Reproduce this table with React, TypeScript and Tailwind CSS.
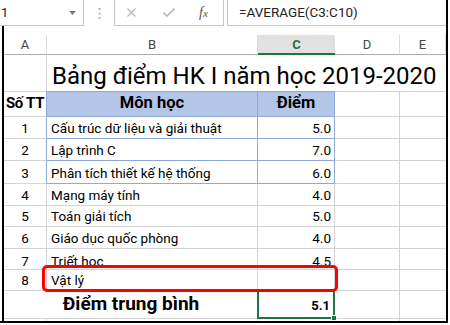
import React from "react";

const font = { fontFamily: "Roboto, 'Liberation Sans', sans-serif" };

const grid = "border-[#d4d4d4]";
const blue = "border-[#8ea9db]";

const rows = [
  { n: "1", name: "Cấu trúc dữ liệu và giải thuật", score: "5.0", h: "h-[22px]", blue: true, pb: "pb-[3px]" },
  { n: "2", name: "Lập trình C", score: "7.0", h: "h-[22px]", blue: true, pb: "pb-[3px]" },
  { n: "3", name: "Phân tích thiết kế hệ thống", score: "6.0", h: "h-[23px]", blue: true, pb: "pb-[3px]" },
  { n: "4", name: "Mạng máy tính", score: "4.0", h: "h-[22px]", blue: false, pb: "pb-[3px]" },
  { n: "5", name: "Toán giải tích", score: "5.0", h: "h-[21px]", blue: false, pb: "pb-[3px]" },
  { n: "6", name: "Giáo dục quốc phòng", score: "4.0", h: "h-[22px]", blue: false, pb: "pb-[3px]" },
  { n: "7", name: "Triết học", score: "4.5", h: "h-[21px]", blue: false, pb: "pb-[1px]" },
  { n: "8", name: "Vật lý", score: "", h: "h-[21px]", blue: false, pb: "pb-[3px]" },
];

function FormulaBar() {
  return (
    <div className="flex h-[26px] shrink-0">
      <div className="w-[84px] h-full border-r border-b border-[#c6c6c6] flex items-center justify-between pr-[7px]">
        <span className="text-[13px] text-[#222] leading-none pl-[1px]">1</span>
        <svg width="7" height="4" viewBox="0 0 7 4">
          <path d="M0 0h7L3.5 4z" fill="#7a7a7a" />
        </svg>
      </div>
      <div className="w-[30px] flex items-center justify-center">
        <svg width="3" height="11" viewBox="0 0 3 11">
          <rect x="0.5" y="0" width="2" height="2" fill="#b5b5b5" />
          <rect x="0.5" y="4.5" width="2" height="2" fill="#b5b5b5" />
          <rect x="0.5" y="9" width="2" height="2" fill="#b5b5b5" />
        </svg>
      </div>
      <div className="w-[110px] h-full border-l border-r border-b border-[#c6c6c6] flex items-center">
        <svg width="9" height="9" viewBox="0 0 9 9" className="ml-[12px]">
          <path d="M0.5 0.5l8 8M8.5 0.5l-8 8" stroke="#b8b8b8" strokeWidth="1.3" />
        </svg>
        <svg width="12" height="9" viewBox="0 0 12 9" className="ml-[27px]">
          <path d="M0.5 4.5l3.5 3.5 7.5-7.5" stroke="#b8b8b8" strokeWidth="1.6" fill="none" />
        </svg>
        <span className="ml-[24px] text-[14px] italic text-[#555] leading-none" style={{ fontFamily: "'Liberation Serif', serif" }}>
          f<span className="text-[11px]">x</span>
        </span>
      </div>
      <div className="ml-[3px] flex-1 h-full border-l border-b border-[#c6c6c6] flex items-center pl-[11px]">
        <span className="text-[13.5px] text-[#222] leading-none">=AVERAGE(C3:C10)</span>
      </div>
    </div>
  );
}

function ColHeaders() {
  const cols = [
    { l: "A", w: "w-[43px]" },
    { l: "B", w: "w-[211px]" },
    { l: "C", w: "w-[77px]", active: true },
    { l: "D", w: "w-[65px]" },
    { l: "E", w: "flex-1" },
  ];
  return (
    <div className="flex h-[20px] shrink-0">
      {cols.map((c) =>
        c.active ? (
          <div key={c.l} className={`${c.w} h-full bg-[#e1e1e1] border-b-2 border-[#217346] flex items-center justify-center text-[13px] font-bold text-[#217346] leading-none`}>
            {c.l}
          </div>
        ) : (
          <div key={c.l} className={`${c.w} h-full border-r border-r-[#dadada] border-b border-b-[#ababab] flex items-center justify-center text-[13px] text-[#444] leading-none`}>
            {c.l}
          </div>
        )
      )}
    </div>
  );
}

export default function App() {
  return (
    <div className="relative w-[450px] h-[325px] bg-white overflow-hidden" style={font}>
      <div className="w-[448px] h-[323px] border-r-2 border-b-2 border-black flex flex-col overflow-hidden">
        <FormulaBar />
        <div className="ml-[2px] flex-1 border-l-2 border-black flex flex-col overflow-hidden">
          <div className="h-[9px] shrink-0" />
          <ColHeaders />

          {/* title row */}
          <div className="flex h-[36px] shrink-0">
            <div className={`w-[43px] border-r ${grid}`} />
            <div className="flex-1 flex items-end pl-[5px] pb-[3px] text-[24px] text-black leading-none whitespace-nowrap">
              Bảng điểm HK I năm học 2019-2020
            </div>
          </div>

          {/* table header */}
          <div className="flex h-[26px] shrink-0">
            <div className={`w-[43px] border-t border-b border-r ${grid} border-r-[#8ea9db] flex items-end justify-center pb-[5px] text-[15px] font-bold leading-none text-black whitespace-nowrap tracking-[-0.3px]`}>
              Số TT
            </div>
            <div className={`w-[211px] border-t border-b border-r ${blue} bg-[#b4c6e7] flex items-end justify-center pb-[5px] text-[16.5px] font-bold leading-none text-black`}>
              Môn học
            </div>
            <div className={`w-[77px] border-t border-b border-r ${blue} bg-[#b4c6e7] flex items-end justify-center pb-[5px] text-[16.5px] font-bold leading-none text-black`}>
              Điểm
            </div>
            <div className={`w-[65px] border-t border-b border-r ${grid}`} />
            <div className={`flex-1 border-t border-b ${grid}`} />
          </div>

          {rows.map((r) => (
            <div key={r.n} className={`flex ${r.h} shrink-0 text-[13.5px] text-black leading-none`}>
              <div className={`w-[43px] border-b border-r ${grid} ${r.blue ? "border-r-[#8ea9db]" : ""} flex items-end justify-center ${r.pb}`}>
                {r.n}
              </div>
              <div className={`w-[211px] border-b border-r ${r.blue ? blue : grid} flex items-end pl-[4px] ${r.pb} whitespace-nowrap`}>
                {r.name}
              </div>
              <div className={`w-[77px] border-b border-r ${r.blue ? blue : grid} flex items-end justify-end pr-[3px] ${r.pb}`}>
                {r.score}
              </div>
              <div className={`w-[65px] border-b border-r ${grid}`} />
              <div className={`flex-1 border-b ${grid}`} />
            </div>
          ))}

          {/* average row */}
          <div className="flex h-[28px] shrink-0 leading-none text-black">
            <div className={`w-[254px] border-b ${grid} flex items-end justify-center pb-[5px] text-[19px] font-bold`}>
              Điểm trung bình
            </div>
            <div className="relative w-[77px] border-b border-r border-transparent">
              <div className="absolute -left-px -top-px -right-px -bottom-px border-2 border-[#217346] flex items-end justify-end pr-[3px] pb-[5px] text-[13px] font-bold">
                5.1
              </div>
              <div className="absolute -right-[3px] -bottom-[3px] w-[6px] h-[6px] bg-[#217346] border border-white" />
            </div>
            <div className={`w-[65px] border-b border-r ${grid}`} />
            <div className={`flex-1 border-b ${grid}`} />
          </div>

          <div className="flex h-[4px] shrink-0">
            <div className={`w-[43px] border-r ${grid}`} />
            <div className={`w-[211px] border-r ${grid}`} />
            <div className={`w-[77px] border-r ${grid}`} />
            <div className={`w-[65px] border-r ${grid}`} />
          </div>
        </div>
      </div>

      {/* highlight around the empty row */}
      <div className="pointer-events-none absolute left-[42px] top-[265px] w-[296px] h-[27px] border-[3px] border-[#ff0000] rounded-[5px]" />
    </div>
  );
}
